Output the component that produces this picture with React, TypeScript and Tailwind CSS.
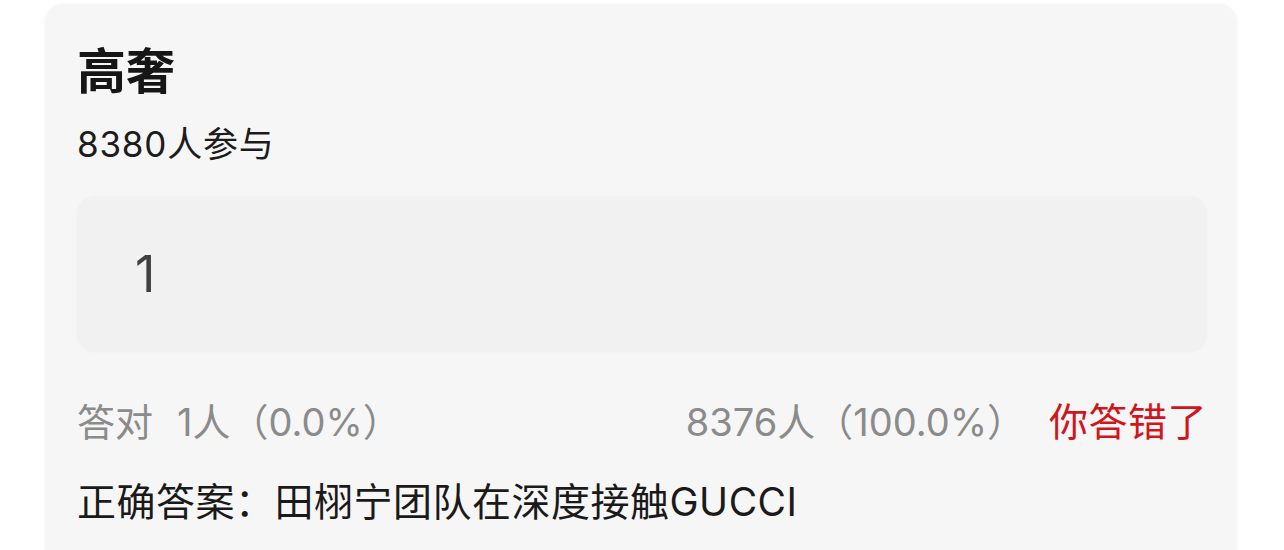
import React from 'react';

const font = { fontFamily: 'Inter, "Noto Sans CJK SC", sans-serif' };

interface QuizResult {
  title: string;
  participants: number;
  answer: string;
  correct: number;
  correctPct: string;
  wrong: number;
  wrongPct: string;
  solution: string;
}

const result: QuizResult = {
  title: '高奢',
  participants: 8380,
  answer: '1',
  correct: 1,
  correctPct: '0.0%',
  wrong: 8376,
  wrongPct: '100.0%',
  solution: '田栩宁团队在深度接触GUCCI',
};

const App = () => {
  return (
    <div className="w-[1284px] h-[550px] bg-white overflow-hidden" style={font}>
      <div className="ml-[45px] mt-[4px] w-[1192px] h-[580px] bg-[#f6f6f6] rounded-[18px] shadow-[0_0_4px_rgba(0,0,0,0.04)] pl-[32px] pr-[30px] pt-[38px]">
        {/* Header */}
        <h1 className="text-[49px] leading-[60px] font-bold text-[#161616]">{result.title}</h1>
        <p className="mt-[20px] text-[35px] leading-[44px] tracking-[0.8px] text-[#1c1c1c]">{result.participants}人参与</p>

        {/* Selected option */}
        <div className="mt-[30px] h-[156px] bg-[#f1f1f1] rounded-[18px] shadow-[0_0_3px_rgba(0,0,0,0.03)] flex items-center pl-[58px]">
          <span className="text-[50px] leading-none font-normal text-[#404040]">{result.answer}</span>
        </div>

        {/* Stats */}
        <div className="mt-[48px] flex items-center justify-between text-[38px] leading-[44px]">
          <span className="text-[#8b8b8b]">
            答对<span className="ml-[24px]">{result.correct}人（{result.correctPct}）</span>
          </span>
          <span className="flex items-center">
            <span className="text-[#8b8b8b]">{result.wrong}人（{result.wrongPct}）</span>
            <span className="ml-[24px] text-[39px] tracking-[0.5px] text-[#d2151b]">你答错了</span>
          </span>
        </div>

        <p className="mt-[36px] text-[39px] leading-[44px] tracking-[0.5px] text-[#1a1a1a]">正确答案：{result.solution}</p>
      </div>
    </div>
  );
};

export default App;
